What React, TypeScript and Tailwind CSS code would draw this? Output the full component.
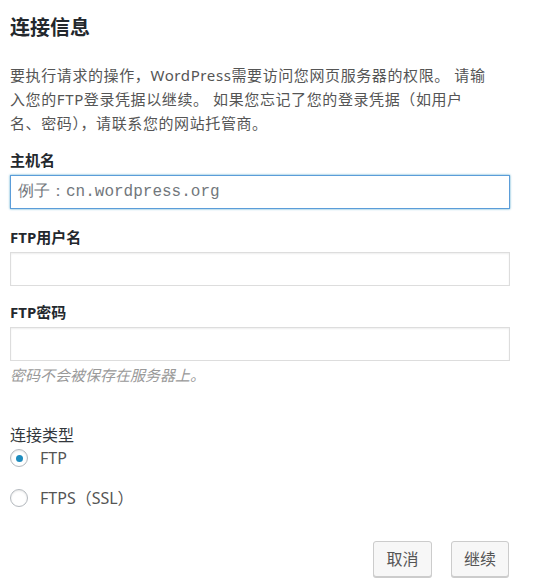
import { useState } from "react";

const font = { fontFamily: '"Noto Sans", "Noto Sans CJK SC", sans-serif' };

function Field({ label, placeholder, focused }: { label: string; placeholder?: string; focused?: boolean }) {
  return (
    <div>
      <label className="block text-[15px] font-bold leading-[20px] text-[#23282d]">{label}</label>
      <input
        type="text"
        placeholder={placeholder}
        className={
          focused
            ? "mt-[5px] block h-[34px] w-[500px] border border-[#5b9dd9] bg-white px-[7px] font-['Liberation_Mono',monospace] text-[16px] text-[#32373c] shadow-[0_0_2px_rgba(30,140,190,0.8)] outline-none placeholder:text-[#72777c]"
            : "mt-[5px] block h-[34px] w-[500px] border border-[#ddd] bg-white px-[7px] text-[16px] text-[#32373c] shadow-[inset_0_1px_2px_rgba(0,0,0,0.07)] outline-none"
        }
      />
    </div>
  );
}

export default function App() {
  const [type, setType] = useState("ftp");

  return (
    <div className="min-h-screen bg-white px-[10px] pt-[14px]" style={font}>
      <h2 className="text-[20px] font-bold leading-[28px] text-[#23282d]">连接信息</h2>
      <p className="mt-[21px] text-[15px] leading-[24px] text-[#555]">
        <span className="block tracking-[0.6px]">要执行请求的操作，WordPress需要访问您网页服务器的权限。 请输</span>
        <span className="block tracking-[0.6px]">入您的FTP登录凭据以继续。 如果您忘记了您的登录凭据（如用户</span>
        <span className="block tracking-[0.6px]">名、密码），请联系您的网站托管商。</span>
      </p>
      <div className="mt-[15px]">
        <Field label="主机名" placeholder="例子：cn.wordpress.org" focused />
      </div>
      <div className="mt-[18px]">
        <Field label="FTP用户名" />
      </div>
      <div className="mt-[16px]">
        <Field label="FTP密码" />
      </div>
      <p className="mt-[3px] text-[15px] italic leading-[22px] text-[#999]">密码不会被保存在服务器上。</p>

      <div className="mt-[38px]">
        <div className="text-[16px] leading-[22px] text-[#32373c]">连接类型</div>
        <div className="mt-[2px] flex flex-col gap-[20px]">
          {[
            { id: "ftp", label: "FTP" },
            { id: "ftps", label: "FTPS（SSL）" },
          ].map((o) => (
            <label key={o.id} className="flex h-[20px] cursor-pointer items-center gap-[12px] text-[16px] text-[#555]">
              <span
                onClick={() => setType(o.id)}
                className="flex h-[18px] w-[18px] items-center justify-center rounded-full border border-[#b4b9be] bg-white shadow-[inset_0_1px_2px_rgba(0,0,0,0.1)]"
              >
                {type === o.id && <span className="h-[7px] w-[7px] rounded-full bg-[#1e8cbe]" />}
              </span>
              <span onClick={() => setType(o.id)}>{o.label}</span>
            </label>
          ))}
        </div>
      </div>

      <div className="mt-[33px] flex w-[499px] justify-end gap-[19px]">
        <button className="h-[36px] w-[59px] rounded-[3px] border border-[#ccc] bg-[#f7f7f7] text-[16px] text-[#555] shadow-[0_1px_0_#ccc]">
          取消
        </button>
        <button className="h-[36px] w-[58px] rounded-[3px] border border-[#ccc] bg-[#f7f7f7] text-[16px] text-[#555] shadow-[0_1px_0_#ccc]">
          继续
        </button>
      </div>
    </div>
  );
}
